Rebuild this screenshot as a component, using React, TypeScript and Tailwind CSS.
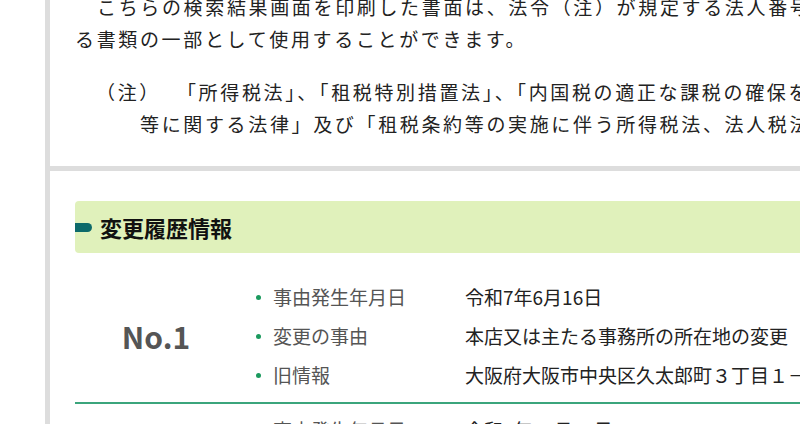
import React from "react";

const font = { fontFamily: '"Noto Sans CJK JP", "Noto Sans", sans-serif' };

function Row({ label, value }: { label: string; value: string }) {
  return (
    <div className="flex h-[39px] items-center">
      <div className="flex w-[228px] shrink-0 items-center pl-[19px]">
        <span className="mr-[12px] block h-[5px] w-[5px] rounded-full bg-[#1b9a5e]" />
        <span className="text-[19px] text-[#555]">{label}</span>
      </div>
      <span className="whitespace-nowrap text-[19px] text-[#222]">{value}</span>
    </div>
  );
}

function Group({ no, rows }: { no: string; rows: [string, string][] }) {
  return (
    <div className="flex border-b-2 border-[#3ba57c] py-[7px]">
      <div className="flex w-[162px] shrink-0 items-center justify-center">
        <span className="text-[30px] font-semibold text-[#555]">{no}</span>
      </div>
      <div className="flex flex-col">
        {rows.map(([l, v]) => (
          <Row key={l} label={l} value={v} />
        ))}
      </div>
    </div>
  );
}

export default function App() {
  return (
    <div className="relative h-[424px] w-[800px] overflow-hidden bg-white" style={font}>
      <div className="ml-[45px] h-[500px] w-[1100px] border-l-[5px] border-[#dddddd]">
        <div className="-mt-[9px] border-b-[5px] border-[#dddddd] pb-[26px] pl-[25px] text-[19px] leading-[32px] tracking-[2.65px] text-[#222]">
          <p className="whitespace-nowrap">
            <span className="pl-[22px]">こちらの検索結果画面を印刷した書面は、法令（注）が規定する法人番号を確認す</span>
            <br />
            る書類の一部として使用することができます。
          </p>
          <p className="mt-[21px] whitespace-nowrap pl-[65px] indent-[-44px]">
            （注）<span className="inline-block w-[16px]" />「所得税法」、「租税特別措置法」、「内国税の適正な課税の確保を図るための国外送金
            <br />
            等に関する法律」及び「租税条約等の実施に伴う所得税法、法人税法及び地方税法の特例等に関する法律」
          </p>
        </div>
        <div className="pl-[25px] pt-[30px]">
          <div className="flex h-[52px] items-center gap-[8px] rounded-[4px] bg-[#e0f1bb]">
            <span className="block h-[9px] w-[17px] rounded-r-full bg-[#0d6a6a]" />
            <span className="text-[22px] font-bold text-[#111]">変更履歴情報</span>
          </div>
          <div className="mt-[18px]">
            <Group
              no="No.1"
              rows={[
                ["事由発生年月日", "令和7年6月16日"],
                ["変更の事由", "本店又は主たる事務所の所在地の変更"],
                ["旧情報", "大阪府大阪市中央区久太郎町３丁目１－１"],
              ]}
            />
            <Group
              no="No.2"
              rows={[
                ["事由発生年月日", "令和4年10月10日"],
                ["変更の事由", "商号又は名称の変更"],
                ["旧情報", "株式会社"],
              ]}
            />
          </div>
        </div>
      </div>
    </div>
  );
}
